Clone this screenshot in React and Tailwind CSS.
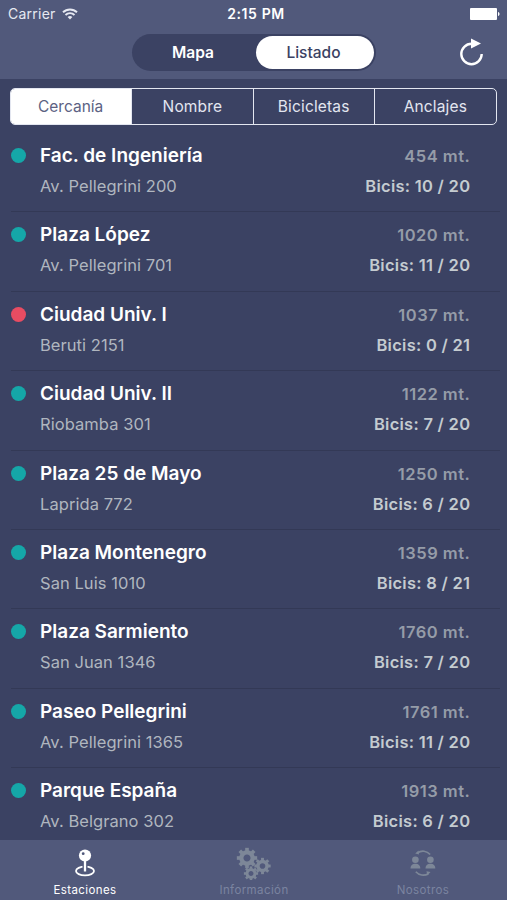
import React from 'react';

const stations = [
  { name: 'Fac. de Ingeniería', address: 'Av. Pellegrini 200', distance: 454, bikes: 10, total: 20 },
  { name: 'Plaza López', address: 'Av. Pellegrini 701', distance: 1020, bikes: 11, total: 20 },
  { name: 'Ciudad Univ. I', address: 'Beruti 2151', distance: 1037, bikes: 0, total: 21 },
  { name: 'Ciudad Univ. II', address: 'Riobamba 301', distance: 1122, bikes: 7, total: 20 },
  { name: 'Plaza 25 de Mayo', address: 'Laprida 772', distance: 1250, bikes: 6, total: 20 },
  { name: 'Plaza Montenegro', address: 'San Luis 1010', distance: 1359, bikes: 8, total: 21 },
  { name: 'Plaza Sarmiento', address: 'San Juan 1346', distance: 1760, bikes: 7, total: 20 },
  { name: 'Paseo Pellegrini', address: 'Av. Pellegrini 1365', distance: 1761, bikes: 11, total: 20 },
  { name: 'Parque España', address: 'Av. Belgrano 302', distance: 1913, bikes: 6, total: 20 },
];

const filters = ['Cercanía', 'Nombre', 'Bicicletas', 'Anclajes'];

const WifiIcon = () => (
  <svg width="16" height="12" viewBox="0 0 16 12" fill="none" stroke="currentColor" strokeWidth="1.9">
    <path d="M1 4.3a10 10 0 0 1 14 0" />
    <path d="M3.5 7a6.4 6.4 0 0 1 9 0" />
    <path d="M8 11.5 5.6 9.1a3.4 3.4 0 0 1 4.8 0z" fill="currentColor" stroke="none" />
  </svg>
);

const BatteryIcon = () => (
  <svg width="30" height="12" viewBox="0 0 30 12" fill="currentColor">
    <rect width="27" height="12" rx="1" />
    <path d="M28 4c2 .4 2 3.6 0 4z" />
  </svg>
);

const RefreshIcon = () => (
  <svg width="26" height="28" viewBox="0 0 26 28" fill="none">
    <path d="M13.5 5.8A10.2 10.2 0 1 0 23.7 16" stroke="currentColor" strokeWidth="2.4" />
    <path d="M13 .6 23 5.6 13 10.6z" fill="currentColor" />
  </svg>
);

const PinIcon = () => (
  <svg width="22" height="28" viewBox="0 0 22 28" fill="none">
    <ellipse cx="11" cy="22" rx="9" ry="4.4" stroke="currentColor" strokeWidth="1.8" />
    <path d="M11 10v12.5" stroke="#51597b" strokeWidth="5" />
    <path d="M11 10v12.5" stroke="currentColor" strokeWidth="2.3" />
    <circle cx="11" cy="6.5" r="6.1" fill="currentColor" />
    <circle cx="9.2" cy="4.7" r="1.4" fill="#51597b" />
  </svg>
);

// eight teeth set around a thick ring
const Gear = ({ x, y, scale }) => (
  <g transform={`translate(${x} ${y}) scale(${scale})`} stroke="currentColor" fill="none">
    <circle r="5.9" strokeWidth="4.4" />
    {[0, 45, 90, 135, 180, 225, 270, 315].map((angle) => (
      <path key={angle} d="M0-7.2V-10.6" strokeWidth="3.8" transform={`rotate(${angle})`} />
    ))}
  </g>
);

const GearsIcon = () => (
  <svg width="36" height="34" viewBox="0 0 36 34">
    <Gear x={11} y={12} scale={0.96} />
    <Gear x={26.5} y={20} scale={0.77} />
    <Gear x={15} y={27.5} scale={0.67} />
  </svg>
);

const PeopleIcon = () => (
  <svg width="26" height="28" viewBox="0 0 26 28" fill="currentColor">
    <circle cx="5.4" cy="10.8" r="3.3" />
    <path d="M.5 19.6c0-3.4 2.2-4.8 4.9-4.8s4.9 1.4 4.9 4.8z" />
    <circle cx="20.4" cy="10.8" r="3.3" />
    <path d="M15.5 19.6c0-3.4 2.2-4.8 4.9-4.8s4.9 1.4 4.9 4.8z" />
    <g fill="none" stroke="currentColor" strokeWidth="1.7">
      <path d="M7.5 3.9c4-2.8 9.4-2.2 12.6 1.6" />
      <path d="M5.8 22.8c3.2 3.6 8.4 4.3 12.6 1.9" />
    </g>
    <path d="M5.2 4.4 8.6 1.4l.4 4.2zM20.5 23.1l-3.2 3.4-.8-4.2z" />
  </svg>
);

const Header = () => (
  <header className="h-[79px] bg-[#51597b] text-white">
    <div className="grid h-[27px] grid-cols-3 items-center pl-2 pr-[7px] text-[14px]">
      <div className="flex items-center gap-[6px] text-[#e6e9f2]">
        <span className="tracking-[0.25px]">Carrier</span>
        <WifiIcon />
      </div>
      <span className="pl-[4px] text-center font-semibold tracking-[0.6px]">2:15 PM</span>
      <div className="flex justify-end">
        <BatteryIcon />
      </div>
    </div>
    <div className="flex items-center justify-between pl-[132px] pr-[22px] pt-[7px]">
      <div className="flex h-[37px] w-[244px] items-center rounded-full bg-[#3b4263] p-[2px] text-[15.5px]">
        <button className="flex-1 pr-[4px] font-semibold">Mapa</button>
        <button className="h-[33px] w-[118px] rounded-full bg-white pr-[3px] font-medium text-[#3b4263]">
          Listado
        </button>
      </div>
      <button className="-mt-[2px] mr-[1px]">
        <RefreshIcon />
      </button>
    </div>
  </header>
);

const StationRow = ({ station }) => (
  <li className="ml-[11px] mr-[7px] flex h-[79.4px] border-b border-[#333956] pr-[30px]">
    <span
      className={`-ml-[0.5px] mt-[15px] size-[15px] shrink-0 rounded-full ${station.bikes === 0 ? 'bg-[#e84c62]' : 'bg-[#15a7a8]'}`}
    />
    <div className="ml-[14.5px] flex-1 pt-[8px]">
      <div className="text-[19px] font-semibold leading-[30px] text-white">{station.name}</div>
      <div className="text-[16.5px] leading-[30px] tracking-[0.06px] text-[#b0b6bf]">{station.address}</div>
    </div>
    <div className="-mr-[0.3px] pt-[8px] text-right text-[16.5px] font-semibold">
      <div className="leading-[30px] tracking-[0.5px] text-[#959ca8]">{station.distance} mt.</div>
      <div className="leading-[30px] tracking-[0.27px] text-[#c4cbd0]">
        Bicis: {station.bikes} / {station.total}
      </div>
    </div>
  </li>
);

const Tab = ({ icon, label, active }) => (
  <button
    className={`flex flex-col items-center justify-between pb-[2px] pt-[6px] ${active ? 'text-white' : 'text-[#7d8798]'}`}
  >
    <span className="flex h-[34px] items-center pl-[1px]">{icon}</span>
    <span className={`pl-[1px] text-[11.5px] leading-4 tracking-[0.4px] ${active ? '' : 'text-[#7b84a0]'}`}>
      {label}
    </span>
  </button>
);

const App = () => (
  <div className="flex h-[900px] w-[507px] flex-col overflow-hidden bg-[#3b4263] font-['Inter','Liberation_Sans',sans-serif]">
    <Header />
    <div className="px-[10px] pt-[9px]">
      <div className="grid h-[37px] grid-cols-4 divide-x divide-[#e3e6f0] overflow-hidden rounded-[5px] border border-[#e3e6f0] text-[15.5px]">
        {filters.map((filter, i) => (
          <button key={filter} className={i === 0 ? 'bg-white pr-[1px] text-[#5c6283]' : 'tracking-[0.15px] text-[#e3e6f0]'}>
            {filter}
          </button>
        ))}
      </div>
    </div>
    <ul className="min-h-0 flex-1 overflow-hidden pt-[8px]">
      {stations.map((station) => (
        <StationRow key={station.name} station={station} />
      ))}
    </ul>
    <nav className="grid h-[60px] shrink-0 grid-cols-3 bg-[#51597b]">
      <Tab icon={<PinIcon />} label="Estaciones" active />
      <Tab icon={<GearsIcon />} label="Información" />
      <Tab icon={<PeopleIcon />} label="Nosotros" />
    </nav>
  </div>
);

export default App;
